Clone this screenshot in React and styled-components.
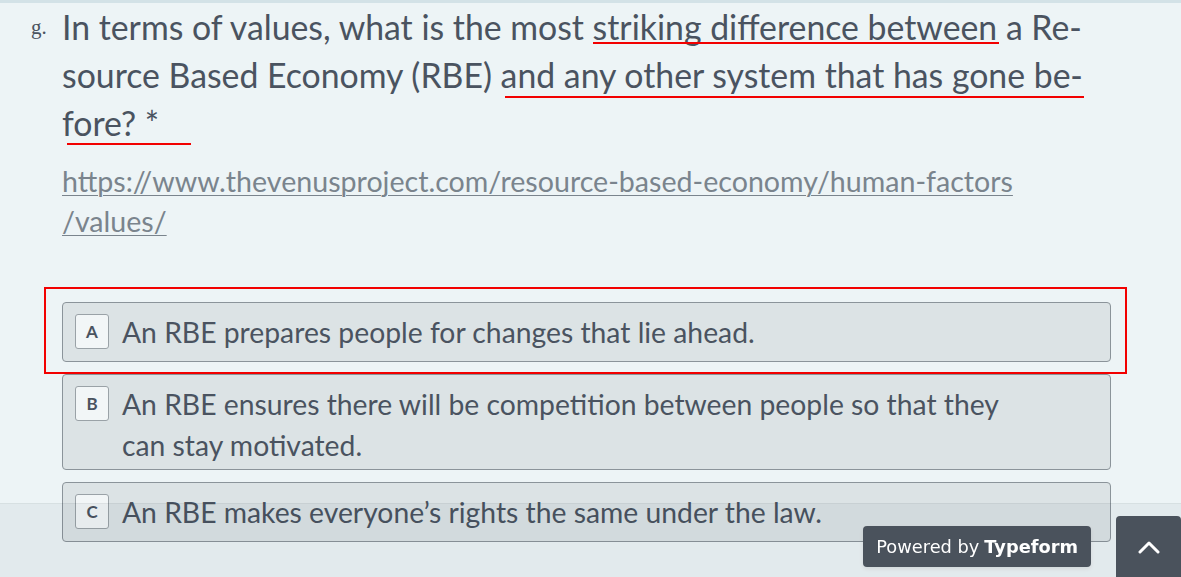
import React from "react";
import styled, { createGlobalStyle } from "styled-components";

const GlobalStyle = createGlobalStyle`
  html, body {
    margin: 0;
    padding: 0;
    background: #edf4f6;
    overflow: hidden;
  }
  body {
    font-family: Lato, "Noto Sans", sans-serif;
    color: #4a5360;
  }
`;

const Page = styled.div`
  min-height: 100vh;
  border-top: 3px solid #d3e2e7;
  box-sizing: border-box;
`;

const Content = styled.div`
  display: flex;
  padding-left: 31px;
`;

const Number = styled.div`
  width: 31px;
  flex: none;
  font-family: "Liberation Serif", "DejaVu Serif", serif;
  font-size: 21px;
  line-height: 48px;
  color: #4a5360;
`;

const Main = styled.div`
  width: 1049px;
  flex: none;
`;

const QuestionBlock = styled.div`
  position: relative;
`;

const Title = styled.h1`
  margin: 0;
  font-size: 33.8px;
  font-weight: 400;
  line-height: 48px;
  color: #4a5360;
`;

const Mark = styled.span`
  position: absolute;
  left: ${(p) => p.$left}px;
  top: ${(p) => p.$top}px;
  width: ${(p) => p.$width}px;
  height: 2px;
  background: #f20000;
`;

const Description = styled.p`
  margin: 14px 0 0;
  font-size: 28.6px;
  line-height: 40px;
`;

const Link = styled.a`
  color: #7a848d;
  text-decoration: underline;
  text-decoration-thickness: 1px;
  text-underline-offset: 3px;
`;

const Options = styled.div`
  margin-top: 61px;
  display: flex;
  flex-direction: column;
  gap: 12px;
`;

const OptionWrap = styled.div`
  position: relative;
`;

const Highlight = styled.div`
  position: absolute;
  top: -15px;
  left: -18px;
  right: -16px;
  bottom: -12px;
  border: 2px solid #f20000;
  pointer-events: none;
`;

const Option = styled.div`
  display: flex;
  align-items: flex-start;
  gap: 13px;
  padding: 9px 12px 3px;
  min-height: 60px;
  box-sizing: border-box;
  background: #dce3e5;
  border: 1px solid #8b949a;
  border-radius: 4px;
`;

const Key = styled.span`
  flex: none;
  width: 34px;
  height: 35px;
  margin-top: 2px;
  box-sizing: border-box;
  display: flex;
  align-items: center;
  justify-content: center;
  background: #f2f6f7;
  border: 1px solid #9aa2a7;
  border-radius: 3px;
  font-size: 17px;
  font-weight: 700;
  color: #4a5360;
`;

const OptionText = styled.span`
  max-width: 905px;
  font-size: 28.3px;
  line-height: 41px;
  color: #4a5360;
`;

const Footer = styled.div`
  position: fixed;
  left: 0;
  right: 0;
  bottom: 0;
  height: 74px;
  display: flex;
  justify-content: flex-end;
  align-items: flex-end;
  background: rgba(0, 25, 35, 0.045);
  border-top: 1px solid rgba(0, 30, 40, 0.05);
  box-sizing: border-box;
`;

const Badge = styled.a`
  display: flex;
  align-items: center;
  height: 41px;
  padding: 0 13px;
  margin: 0 25px 10px 0;
  border-radius: 4px;
  background: #4a525c;
  color: #ffffff;
  font-family: "DejaVu Sans", sans-serif;
  font-size: 17.8px;
  text-decoration: none;
  box-shadow: 0 2px 4px rgba(0, 0, 0, 0.08);
  b {
    font-weight: 700;
    margin-left: 5px;
  }
`;

const UpButton = styled.button`
  width: 65px;
  height: 61px;
  border: none;
  border-radius: 4px 4px 0 0;
  background: #4a525c;
  display: flex;
  align-items: center;
  justify-content: center;
  padding: 0;
  cursor: pointer;
`;

const options = [
  { key: "A", text: "An RBE prepares people for changes that lie ahead.", selected: true },
  { key: "B", text: "An RBE ensures there will be competition between people so that they can stay motivated." },
  { key: "C", text: "An RBE makes everyone\u2019s rights the same under the law." },
];

export default function App() {
  return (
    <>
      <GlobalStyle />
      <Page>
        <Content>
          <Number>g.</Number>
          <Main>
            <QuestionBlock>
              <Title>
                In terms of values, what is the most striking difference between a Re{"\u00AD"}source Based
                Economy (RBE) and any other system that has gone be{"\u00AD"}fore? *
              </Title>
              <Mark $left={531} $top={39} $width={406} />
              <Mark $left={443} $top={93} $width={579} />
              <Mark $left={5} $top={140} $width={124} />
            </QuestionBlock>
            <Description>
              <Link href="#">
                https://www.thevenusproject.com/resource-based-economy/human-factors<wbr />/values/
              </Link>
            </Description>
            <Options>
              {options.map((o) => (
                <OptionWrap key={o.key}>
                  <Option>
                    <Key>{o.key}</Key>
                    <OptionText>{o.text}</OptionText>
                  </Option>
                  {o.selected && <Highlight />}
                </OptionWrap>
              ))}
            </Options>
          </Main>
        </Content>
        <Footer>
          <Badge href="#">
            Powered by <b>Typeform</b>
          </Badge>
          <UpButton aria-label="Previous">
            <svg width="22" height="14" viewBox="0 0 22 14" fill="none">
              <path d="M2 12 L11 3 L20 12" stroke="#fff" strokeWidth="3" strokeLinecap="round" strokeLinejoin="round" />
            </svg>
          </UpButton>
        </Footer>
      </Page>
    </>
  );
}
